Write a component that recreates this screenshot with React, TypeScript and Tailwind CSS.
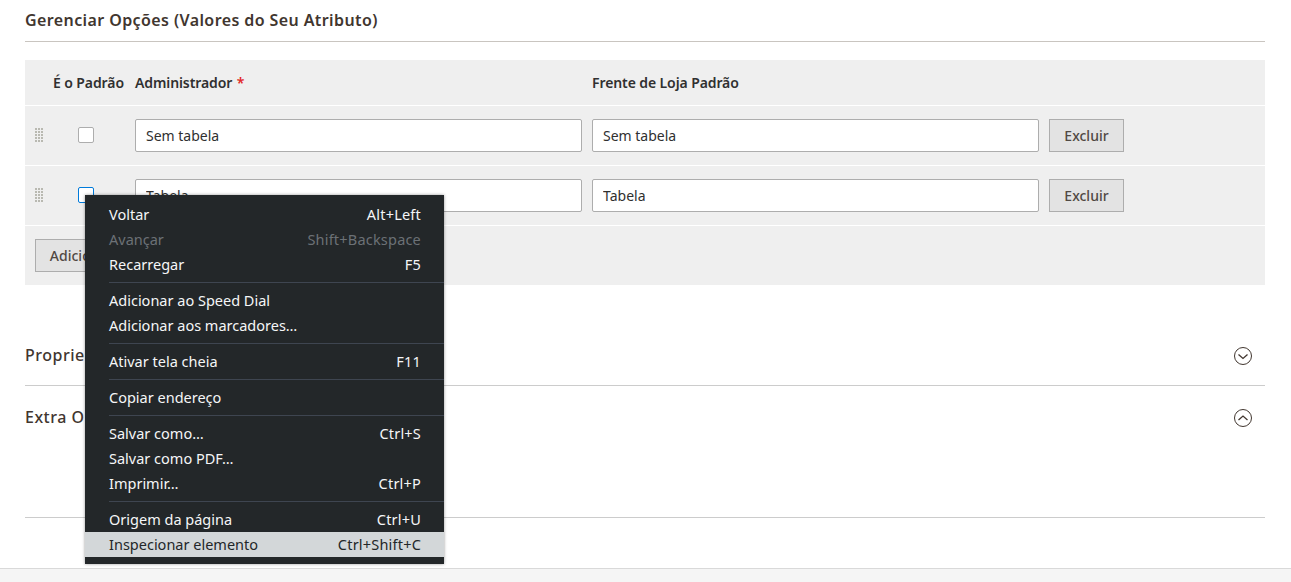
import React from 'react';

const inputClass = 'h-[33px] w-[447px] rounded-[2px] border border-[#adadad] bg-white px-[10px] text-[14px] text-[#303030]';
const buttonClass = 'h-[33px] border border-[#adadad] bg-[#e3e3e3] text-[14px] font-medium text-[#514943]';

function DragHandle() {
  return (
    <svg width="8" height="14" viewBox="0 0 8 14" className="block fill-[#b9b9b1]">
      {[0, 3, 6, 9, 12].map((y) =>
        [0, 3, 6].map((x) => <rect key={`${x}-${y}`} x={x} y={y} width="2" height="2" />)
      )}
    </svg>
  );
}

function OptionRow({ value, focused }: { value: string; focused?: boolean }) {
  return (
    <div className="mt-px flex h-[59px] items-center bg-[#efefef] pl-[10px]">
      <div className="-mt-[1px] w-[8px]">
        <DragHandle />
      </div>
      <div className="flex w-[92px] pl-[35px]">
        <div
          className={`-mt-[1px] h-4 w-4 rounded-[2px] border bg-white ${focused ? 'border-[#007bdb]' : 'border-[#adadad]'}`}
        />
      </div>
      <input readOnly value={value} className={inputClass} />
      <input readOnly value={value} className={`${inputClass} ml-[10px]`} />
      <button className={`${buttonClass} ml-[10px] w-[75px]`}>Excluir</button>
    </div>
  );
}

function Chevron({ up }: { up?: boolean }) {
  return (
    <svg width="20" height="20" viewBox="0 0 20 20" fill="none" stroke="#41362f" strokeWidth="1" className="mr-[12px] mt-[2px]">
      <circle cx="10" cy="10" r="8.5" />
      <path d={up ? 'M5.5 12 L10 8 L14.5 12' : 'M5.5 8.5 L10 12.5 L14.5 8.5'} strokeWidth="1.3" />
    </svg>
  );
}

type MenuItem = { label: string; shortcut?: string; disabled?: boolean; active?: boolean };

const menuGroups: MenuItem[][] = [
  [
    { label: 'Voltar', shortcut: 'Alt+Left' },
    { label: 'Avançar', shortcut: 'Shift+Backspace', disabled: true },
    { label: 'Recarregar', shortcut: 'F5' },
  ],
  [{ label: 'Adicionar ao Speed Dial' }, { label: 'Adicionar aos marcadores…' }],
  [{ label: 'Ativar tela cheia', shortcut: 'F11' }],
  [{ label: 'Copiar endereço' }],
  [
    { label: 'Salvar como…', shortcut: 'Ctrl+S' },
    { label: 'Salvar como PDF…' },
    { label: 'Imprimir…', shortcut: 'Ctrl+P' },
  ],
  [
    { label: 'Origem da página', shortcut: 'Ctrl+U' },
    { label: 'Inspecionar elemento', shortcut: 'Ctrl+Shift+C', active: true },
  ],
];

function ContextMenu() {
  return (
    <div className="absolute left-[85px] top-[195px] w-[359px] bg-[#232729] pb-[7px] pt-[7px] font-['Noto_Sans',sans-serif] text-[14.5px] shadow-[0_0_3px_rgba(0,0,0,0.4)]">
      {menuGroups.map((group, i) => (
        <div key={i}>
          {i > 0 && <div className="my-[5px] ml-[24px] h-px bg-[#3e4550]" />}
          {group.map((item) => (
            <div
              key={item.label}
              className={`flex h-[25px] items-center justify-between pl-[24px] pr-[23px] pt-[1px] ${
                item.active ? 'bg-[#d3d7d9] text-[#232729]' : item.disabled ? 'text-[#6c7176]' : 'text-[#f5f6f7]'
              }`}
            >
              <span>{item.label}</span>
              {item.shortcut && <span className="tracking-[0.2px]">{item.shortcut}</span>}
            </div>
          ))}
        </div>
      ))}
    </div>
  );
}

export default function App() {
  return (
    <div className="relative flex h-[582px] flex-col overflow-hidden bg-white font-['Noto_Sans',sans-serif] text-[#41362f]">
      <div className="flex-1 pl-[25px] pr-[26px]">
        <div className="flex h-[42px] items-start border-b border-[#c9c5c0] pt-[9px]">
          <h2 className="text-[16px] font-semibold leading-[22px] tracking-[0.4px] text-[#41362f]">
            Gerenciar Opções (Valores do Seu Atributo)
          </h2>
        </div>

        <div className="mt-[18px]">
          <div className="flex h-[45px] items-center bg-[#efefef] text-[14px] font-semibold tracking-[-0.1px] text-[#303030]">
            <div className="w-[110px] pl-[28px]">É o Padrão</div>
            <div className="w-[457px]">
              Administrador <span className="ml-px text-[#e22626]">*</span>
            </div>
            <div>Frente de Loja Padrão</div>
          </div>
          <OptionRow value="Sem tabela" />
          <OptionRow value="Tabela" focused />
          <div className="mt-px flex h-[59px] items-center bg-[#efefef] pl-[10px]">
            <button className={`${buttonClass} -mt-[1px] w-[140px]`}>Adicionar Opção</button>
          </div>
        </div>

        <div className="mt-[38px] flex h-[63px] items-start justify-between border-b border-[#cccccc] pt-[21px]">
          <span className="text-[16px] font-medium leading-[22px] tracking-[0.5px]">Propriedades da Frente de Loja</span>
          <Chevron />
        </div>
        <div className="flex h-[132px] items-start justify-between border-b border-[#cccccc] pt-[20px]">
          <span className="text-[16px] font-medium leading-[22px] tracking-[0.5px]">Extra Opções</span>
          <Chevron up />
        </div>
      </div>

      <div className="h-[14px] border-t border-[#d9d9d9] bg-[#f5f5f5]" />
      <ContextMenu />
    </div>
  );
}
